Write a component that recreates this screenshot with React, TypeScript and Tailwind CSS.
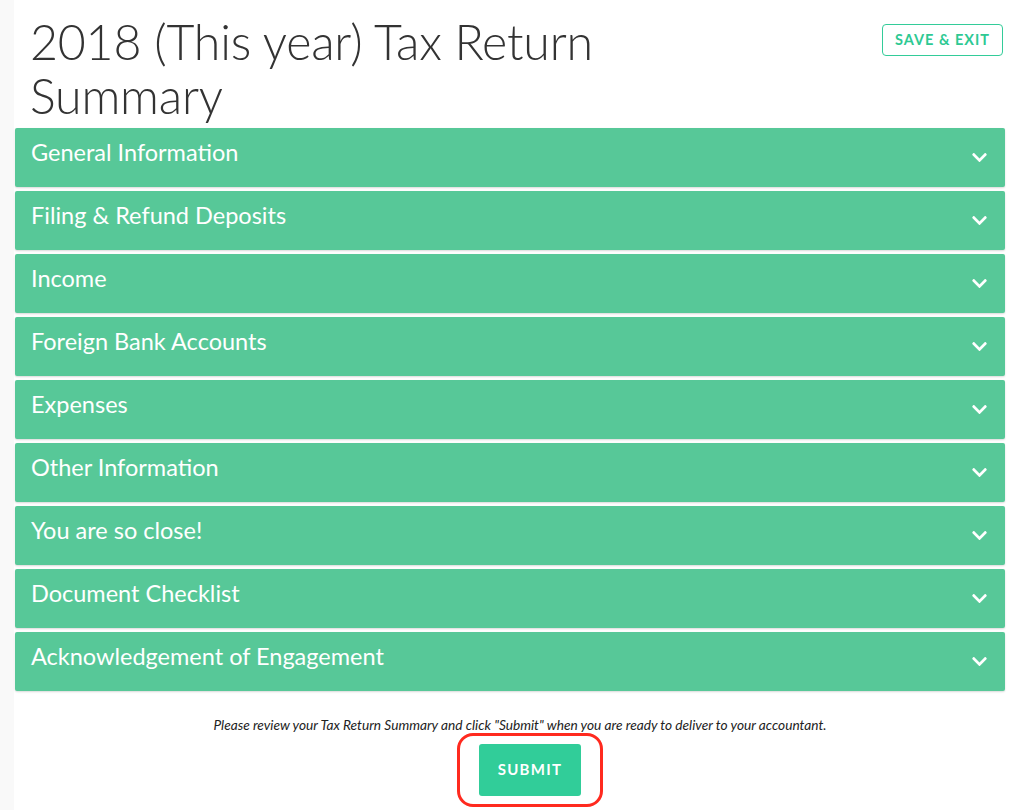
import React from 'react';
import { FaChevronDown } from 'react-icons/fa';

const sections = [
  'General Information',
  'Filing & Refund Deposits',
  'Income',
  'Foreign Bank Accounts',
  'Expenses',
  'Other Information',
  'You are so close!',
  'Document Checklist',
  'Acknowledgement of Engagement',
];

const App = () => {
  return (
    <div className="flex min-h-[810px] bg-[#f9f9f9] font-['Lato',sans-serif] text-[#333]">
      <div className="w-[14px] shrink-0" />
      <main className="flex-1 bg-white pl-px pr-[17px]">
        <header className="flex items-start justify-between pl-[15px] pt-[14px]">
          <h1 className="w-[600px] text-[48.3px] font-light leading-[54px] tracking-[-0.2px] text-[#333]">
            2018 (This year) Tax Return Summary
          </h1>
          <button className="mt-[10px] mr-[2px] h-[32px] rounded-[4px] border border-[#33cc99] px-[12px] text-[14.5px] font-bold tracking-[1px] text-[#2ec993]">
            SAVE &amp; EXIT
          </button>
        </header>

        <div className="mt-[6px] flex flex-col gap-[4px]">
          {sections.map((title) => (
            <div
              key={title}
              className="flex h-[59px] items-center justify-between rounded-[2px] bg-[#57c898] pl-[16px] pr-[17px] shadow-[0_1px_2px_rgba(0,0,0,0.15)]"
            >
              <span className="pb-[10px] text-[23.5px] leading-none text-white">{title}</span>
              <FaChevronDown className="h-[17px] w-[17px] text-white" />
            </div>
          ))}
        </div>

        <p className="mt-[24px] pl-[20px] text-center text-[13.7px] italic text-[#222]">
          Please review your Tax Return Summary and click "Submit" when you are ready to deliver to your accountant.
        </p>

        <div className="mt-[-3px] flex justify-center">
          <div className="ml-[40px] rounded-[16px] border-[3px] border-[#ff2a1f] px-[19px] py-[8px]">
            <button className="h-[52px] w-[102px] rounded-[3px] bg-[#31cd99] text-[15px] font-bold tracking-[1.3px] text-white">
              SUBMIT
            </button>
          </div>
        </div>
      </main>
    </div>
  );
};

export default App;
